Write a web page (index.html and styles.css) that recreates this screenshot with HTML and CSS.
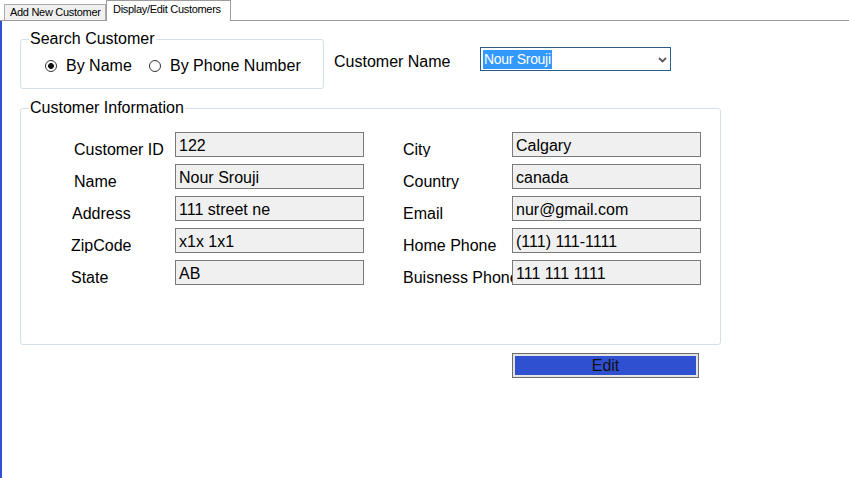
FILE: index.html
```html
<!DOCTYPE html>
<html>
<head>
<meta charset="utf-8">
<title>Customers</title>
<link rel="stylesheet" href="styles.css">
</head>
<body>
<div class="tabs">
  <div class="tab">Add New Customer</div>
  <div class="tab active">Display/Edit Customers</div>
</div>
<div class="main">
  <div class="top-row">
    <fieldset class="group search">
      <legend>Search Customer</legend>
      <div class="options">
        <div class="opt first"><span class="radio checked"></span><span>By Name</span></div>
        <div class="opt"><span class="radio"></span><span>By Phone Number</span></div>
      </div>
    </fieldset>
    <div class="cn-label">Customer Name</div>
    <div class="combo">
      <span class="sel">Nour Srouji</span>
      <svg class="chev" width="9" height="6" viewBox="0 0 9 6"><path d="M1 1 L4.5 4.5 L8 1" fill="none" stroke="#5a5a5a" stroke-width="1.8"/></svg>
    </div>
  </div>
  <fieldset class="group info">
    <legend>Customer Information</legend>
    <div class="grid">
      <div class="lbl in3">Customer ID</div><div class="box">122</div><div></div>
      <div class="lbl">City</div><div class="box">Calgary</div>

      <div class="lbl in3">Name</div><div class="box">Nour Srouji</div><div></div>
      <div class="lbl">Country</div><div class="box">canada</div>

      <div class="lbl in1">Address</div><div class="box">111 street ne</div><div></div>
      <div class="lbl">Email</div><div class="box">nur@gmail.com</div>

      <div class="lbl">ZipCode</div><div class="box">x1x 1x1</div><div></div>
      <div class="lbl">Home Phone</div><div class="box">(111) 111-1111</div>

      <div class="lbl">State</div><div class="box">AB</div><div></div>
      <div class="lbl">Buisness Phone</div><div class="box">111 111 1111</div>
    </div>
  </fieldset>
  <div class="btn-row">
    <div class="edit-btn">Edit</div>
  </div>
</div>
</body>
</html>
```

FILE: styles.css
```css
html, body {
  margin: 0;
  padding: 0;
  background: #ffffff;
}
body {
  width: 849px;
  height: 478px;
  overflow: hidden;
  font-family: "Liberation Sans", Arial, sans-serif;
  font-size: 16px;
  color: #000;
}

/* tabs */
.tabs {
  display: flex;
  align-items: flex-end;
  height: 21px;
  box-sizing: border-box;
  padding-left: 4px;
  border-bottom: 1px solid #9c9c9c;
}
.tab {
  box-sizing: border-box;
  height: 16px;
  width: 102px;
  padding-left: 5px;
  font-size: 11px;
  line-height: 15px;
  letter-spacing: -0.3px;
  background: #f0f0f0;
  border: 1px solid #acacac;
  border-bottom: none;
  white-space: nowrap;
}
.tab.active {
  height: 21px;
  width: 125px;
  margin-bottom: -1px;
  padding-left: 6px;
  padding-top: 1px;
  background: #ffffff;
  border-color: #9c9c9c;
}

/* main area */
.main {
  box-sizing: border-box;
  height: 457px;
  border-left: 2px solid #3050d2;
  padding: 9px 0 0 18px;
}
.top-row {
  display: flex;
  align-items: flex-start;
}

.group {
  margin: 0;
  padding: 0;
  border: 1px solid #d5dfe5;
  border-radius: 3px;
  min-inline-size: 0;
  box-sizing: border-box;
}
.group legend {
  margin-left: 8px;
  padding: 0 1px;
  font-size: 16px;
  line-height: 18px;
}

.search {
  width: 304px;
}
.options {
  display: flex;
  align-items: center;
  height: 18px;
  padding: 9px 0 13px 24px;
  line-height: 18px;
}
.opt {
  display: flex;
  align-items: center;
  gap: 9px;
  white-space: nowrap;
}
.opt.first {
  width: 104px;
}
.radio {
  box-sizing: border-box;
  width: 12px;
  height: 12px;
  border: 1px solid #333;
  border-radius: 50%;
  background: #fff;
  flex: none;
}
.radio.checked {
  background: radial-gradient(circle, #111 0 2.6px, #fff 3.2px);
}

.cn-label {
  width: 146px;
  margin-left: 10px;
  margin-top: 23px;
  line-height: 18px;
  white-space: nowrap;
}
.combo {
  box-sizing: border-box;
  width: 191px;
  height: 24px;
  margin-top: 17px;
  border: 1px solid #2b5d8a;
  display: flex;
  align-items: center;
  padding-left: 2px;
}
.sel {
  background: #3399ff;
  color: #fff;
  font-size: 14px;
  line-height: 19px;
  letter-spacing: -0.3px;
  padding: 0 1px;
  white-space: nowrap;
}
.chev {
  margin-left: auto;
  margin-right: 3px;
  margin-top: 1px;
}

/* customer information */
.info {
  width: 701px;
  margin-top: 10px;
}
.grid {
  display: grid;
  grid-template-columns: 104px 189px 39px 109px 189px;
  grid-auto-rows: 25px;
  row-gap: 7px;
  padding: 15px 0 59px 50px;
}
.lbl {
  padding-top: 8px;
  line-height: 19px;
  white-space: nowrap;
  overflow: hidden;
}
.lbl.in3 { padding-left: 3px; }
.lbl.in1 { padding-left: 1px; }
.box {
  box-sizing: border-box;
  height: 25px;
  border: 1px solid #7a7a7a;
  background: #f0f0f0;
  padding: 4px 3px 0 3px;
  line-height: 18px;
  white-space: nowrap;
  overflow: hidden;
}

/* edit button */
.btn-row {
  display: flex;
  padding-left: 492px;
  margin-top: 8px;
}
.edit-btn {
  box-sizing: border-box;
  width: 187px;
  height: 25px;
  border: 1px solid #6d6d6d;
  background: #3050d2;
  box-shadow: inset 0 0 0 2px #e3e3e3;
  display: flex;
  align-items: center;
  justify-content: center;
  color: #111;
  font-size: 16px;
  line-height: 18px;
}
```
